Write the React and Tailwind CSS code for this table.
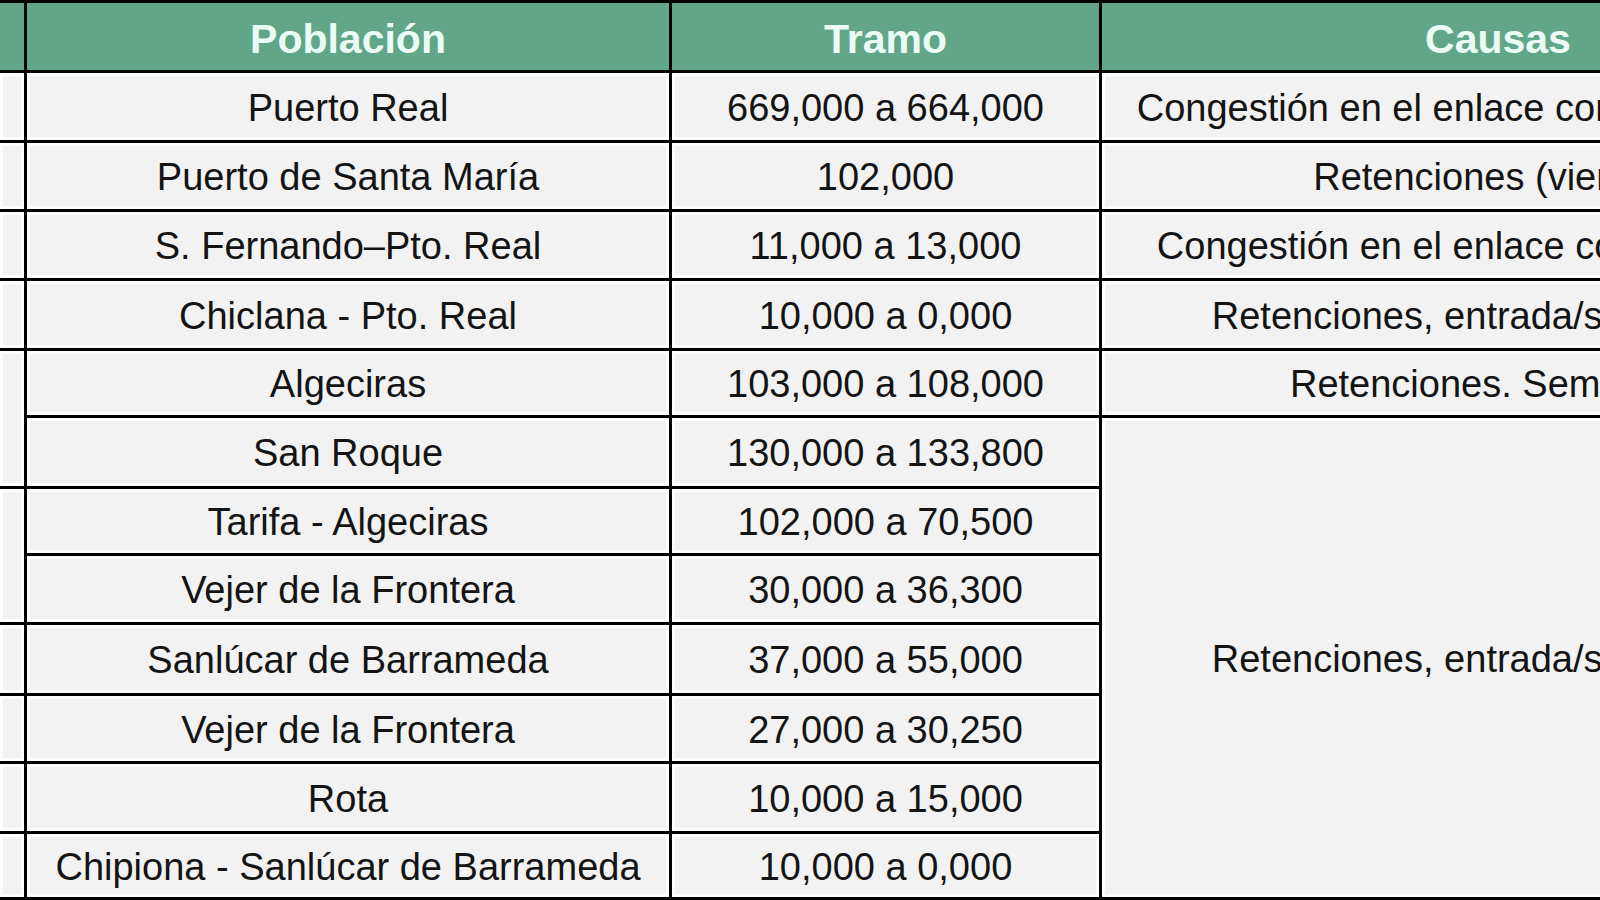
import React from "react";

const rows = [
  { pob: "Puerto Real", tramo: "669,000 a 664,000", causa: "Congestión en el enlace con la autovía A-4" },
  { pob: "Puerto de Santa María", tramo: "102,000", causa: "Retenciones (viernes)" },
  { pob: "S. Fernando–Pto. Real", tramo: "11,000 a 13,000", causa: "Congestión en el enlace con la carretera" },
  { pob: "Chiclana - Pto. Real", tramo: "10,000 a 0,000", causa: "Retenciones, entrada/salida playa" },
  { pob: "Algeciras", tramo: "103,000 a 108,000", causa: "Retenciones. Semáforos" },
  { pob: "San Roque", tramo: "130,000 a 133,800" },
  { pob: "Tarifa - Algeciras", tramo: "102,000 a 70,500" },
  { pob: "Vejer de la Frontera", tramo: "30,000 a 36,300" },
  { pob: "Sanlúcar de Barrameda", tramo: "37,000 a 55,000" },
  { pob: "Vejer de la Frontera", tramo: "27,000 a 30,250" },
  { pob: "Rota", tramo: "10,000 a 15,000" },
  { pob: "Chipiona - Sanlúcar de Barrameda", tramo: "10,000 a 0,000" },
];

const cell =
  "bg-[#f2f2f2] shadow-[inset_0_0_0_3px_#ffffff] flex items-center justify-center whitespace-nowrap overflow-hidden text-[38px] leading-none text-[#141414] pt-[2px]";
const head =
  "bg-[#62a689] flex items-center justify-center whitespace-nowrap text-[41px] font-bold leading-none text-[#eafcf5] pt-[5px]";

export default function App() {
  return (
    <div
      className="w-[1600px] h-[900px] overflow-hidden bg-white"
      style={{ fontFamily: '"Liberation Sans", Arial, sans-serif' }}
    >
      <div className="grid w-max bg-black gap-[3px] py-[3px] grid-cols-[24px_642px_427px_792px] grid-rows-[67px_67px_66px_66px_67px_64px_68px_64px_66px_68px_65px_67px_63px]">
        {/* header */}
        <div className={head}></div>
        <div className={head}>Población</div>
        <div className={head}>Tramo</div>
        <div className={head}>Causas</div>

        {/* rows 1-4 */}
        {rows.slice(0, 4).map((r, i) => (
          <React.Fragment key={i}>
            <div className={cell}></div>
            <div className={cell}>{r.pob}</div>
            <div className={cell}>{r.tramo}</div>
            <div className={cell}>{r.causa}</div>
          </React.Fragment>
        ))}

        {/* row 5 (Algeciras) with merged left cell over rows 5-6 */}
        <div className={cell + " row-span-2"}></div>
        <div className={cell}>{rows[4].pob}</div>
        <div className={cell}>{rows[4].tramo}</div>
        <div className={cell}>{rows[4].causa}</div>

        {/* row 6 (San Roque), merged causa over rows 6-12 */}
        <div className={cell}>{rows[5].pob}</div>
        <div className={cell}>{rows[5].tramo}</div>
        <div className={cell + " row-span-7"}>Retenciones, entrada/salida playa</div>

        {/* rows 7-8 with merged left cell */}
        <div className={cell + " row-span-2"}></div>
        <div className={cell}>{rows[6].pob}</div>
        <div className={cell}>{rows[6].tramo}</div>
        <div className={cell}>{rows[7].pob}</div>
        <div className={cell}>{rows[7].tramo}</div>

        {/* rows 9-12 */}
        {rows.slice(8).map((r, i) => (
          <React.Fragment key={"b" + i}>
            <div className={cell}></div>
            <div className={cell}>{r.pob}</div>
            <div className={cell}>{r.tramo}</div>
          </React.Fragment>
        ))}
      </div>
    </div>
  );
}
